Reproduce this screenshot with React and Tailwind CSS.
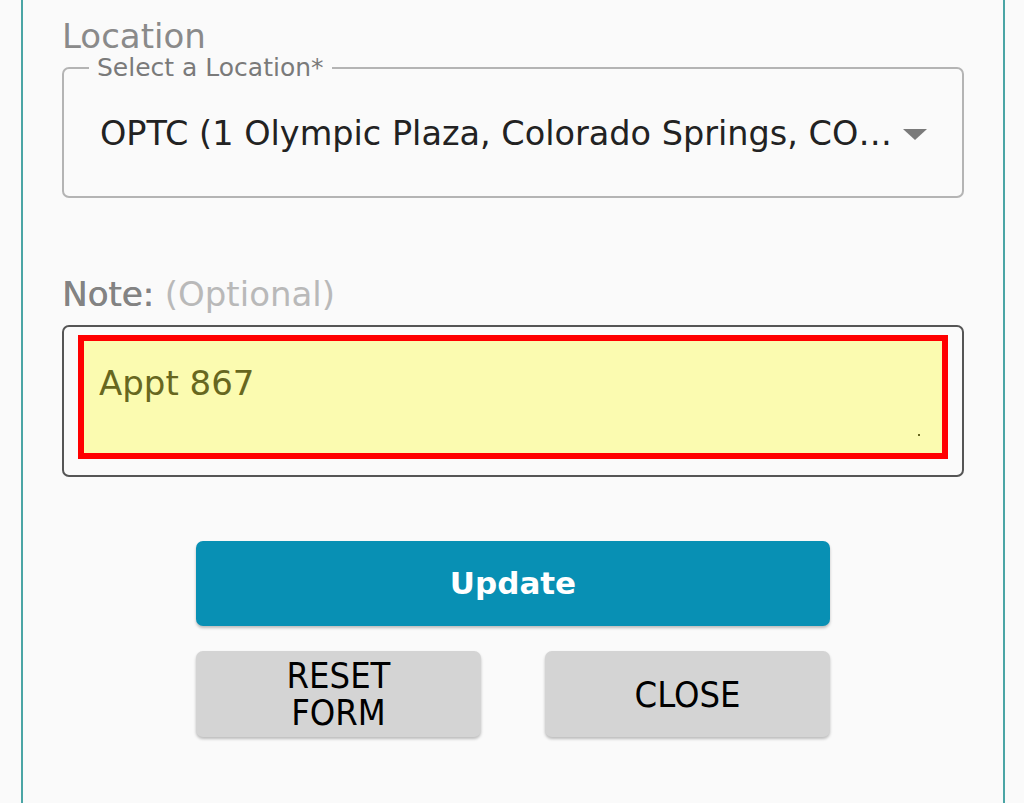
import { useState } from 'react'

export default function App() {
  const [note, setNote] = useState('Appt 867')

  return (
    <div className="w-full h-[803px] bg-[#fafafa] overflow-hidden" style={{ fontFamily: '"DejaVu Sans", Verdana, sans-serif' }}>
      <div className="ml-[21px] w-[984px] h-full border-x-2 border-[#4aa5a5] pl-[39px] pr-[39px] pt-[19px]">
        {/* Location */}
        <div className="text-[34px] leading-[34px] text-[#8a8a8a]">Location</div>
        <fieldset className="mt-[3px] w-full min-w-0 h-[142px] border-2 border-[#b4b4b4] rounded-[7px]">
          <legend className="ml-[25px] px-[8px] text-[25px] leading-[24px] text-[#7a7a7a]">
            Select a Location*
          </legend>
          <div className="flex items-center pt-[34px] pl-[36px] pr-[35px]">
            <span className="flex-1 whitespace-nowrap text-[33.5px] leading-[40px] text-[#222]">
              OPTC (1 Olympic Plaza, Colorado Springs, CO…
            </span>
            <svg width="24" height="11" viewBox="0 0 24 11" className="ml-[2px] shrink-0">
              <path d="M0 0 L24 0 L12 11 Z" fill="#7a7a7a" />
            </svg>
          </div>
        </fieldset>

        {/* Note */}
        <div className="mt-[79px] text-[34px] leading-[34px]">
          <span className="text-[#838383] [text-shadow:0.6px_0_0_#838383]">Note:</span>{' '}
          <span className="text-[#b9b9b9]">(Optional)</span>
        </div>
        <div className="mt-[14px] border-2 border-[#555] rounded-[7px] pt-[8px] px-[14px] pb-[16px]">
          <div className="relative h-[124px] border-[6px] border-[#ff0000] bg-[#fbfbb0] pl-[15px] pt-[22px]">
            <input
              value={note}
              onChange={e => setNote(e.target.value)}
              className="w-full bg-transparent outline-none text-[34px] leading-[40px] text-[#67671f]"
            />
            <span className="absolute right-[22px] bottom-[17px] w-[2px] h-[2px] bg-[#67671f]" />
          </div>
        </div>

        {/* Buttons */}
        <div className="w-[634px] mx-auto mt-[64px] flex flex-col gap-[25px]">
          <button className="h-[85px] rounded-[7px] bg-[#0890b4] text-white text-[31px] font-bold shadow-[0_2px_3px_rgba(0,0,0,0.25)]">
            Update
          </button>
          <div className="flex justify-between">
            <button
              className="w-[285px] h-[86px] rounded-[7px] bg-[#d4d4d4] px-[50px] text-[36px] leading-[37px] text-black shadow-[0_2px_3px_rgba(0,0,0,0.25)]"
              style={{ fontFamily: '"DejaVu Sans Condensed", "DejaVu Sans", sans-serif' }}
            >
              RESET FORM
            </button>
            <button
              className="w-[285px] h-[86px] rounded-[7px] bg-[#d4d4d4] text-[36px] leading-[37px] text-black shadow-[0_2px_3px_rgba(0,0,0,0.25)]"
              style={{ fontFamily: '"DejaVu Sans Condensed", "DejaVu Sans", sans-serif' }}
            >
              CLOSE
            </button>
          </div>
        </div>
      </div>
    </div>
  )
}
